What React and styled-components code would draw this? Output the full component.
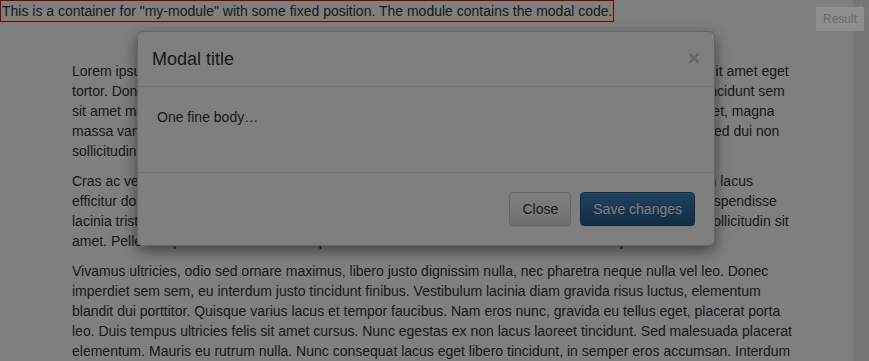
import React from 'react';
import styled, { createGlobalStyle } from 'styled-components';

const GlobalStyle = createGlobalStyle`
	html, body {
		margin: 0;
		padding: 0;
		height: 100%;
		overflow: hidden;
	}
	body {
		font-family: "Liberation Sans", Arial, sans-serif;
		font-size: 14px;
		line-height: 20px;
		color: #333;
		background: #fff;
	}
	#root {
		height: 100%;
	}
`;

const Frame = styled.div`
	position: relative;
	display: flex;
	height: 100%;
`;

const Viewport = styled.div`
	position: relative;
	flex: 1;
	overflow: hidden;
	background: #fff;
`;

const Scrollbar = styled.div`
	width: 16px;
	background: #777;
	display: flex;
	justify-content: center;
	padding-top: 6px;
	box-sizing: border-box;
`;

const ArrowUp = styled.span`
	width: 0;
	height: 0;
	border-left: 4px solid transparent;
	border-right: 4px solid transparent;
	border-bottom: 4px solid #a0a0a0;
`;

const ResultTag = styled.div`
	position: absolute;
	top: 7px;
	right: 5px;
	z-index: 3;
	width: 48px;
	height: 24px;
	display: flex;
	align-items: center;
	justify-content: center;
	background: #8e8e8e;
	color: #6a6a6a;
	font-size: 12px;
`;

const ModuleBox = styled.div`
	width: fit-content;
	border: 1px solid #f00;
	padding: 0 1px;
`;

const Container = styled.div`
	width: 720px;
	margin: 39px 0 0 72px;
`;

const Paragraph = styled.p`
	margin: 0 0 10px;
`;

const ModalLayer = styled.div`
	position: absolute;
	inset: 0;
	z-index: 1;
`;

const Dialog = styled.div`
	box-sizing: border-box;
	width: 578px;
	margin: 31px 0 0 137px;
	background: #fff;
	border: 1px solid rgba(0, 0, 0, 0.2);
	border-radius: 6px;
	box-shadow: 0 5px 15px rgba(0, 0, 0, 0.5);
`;

const ModalHeader = styled.div`
	display: flex;
	justify-content: space-between;
	align-items: center;
	padding: 15px 14px 15px 14px;
	border-bottom: 1px solid #e5e5e5;
`;

const ModalTitle = styled.h4`
	margin: 0;
	font-size: 18px;
	font-weight: normal;
	line-height: 24px;
`;

const CloseX = styled.button`
	padding: 0;
	border: 0;
	background: none;
	font-family: inherit;
	font-size: 21px;
	font-weight: bold;
	line-height: 1;
	color: #000;
	opacity: 0.2;
	text-shadow: 0 1px 0 #fff;
	margin-top: -3px;
`;

const ModalBody = styled.div`
	padding: 20px 19px;
	min-height: 45px;
`;

const ModalFooter = styled.div`
	display: flex;
	justify-content: flex-end;
	gap: 9px;
	padding: 19px;
	border-top: 1px solid #e5e5e5;
`;

const Button = styled.button`
	font-family: inherit;
	font-size: 14px;
	line-height: 20px;
	padding: 6px 12px;
	border-radius: 4px;
	border: 1px solid ${({ primary }) => (primary ? '#245580' : '#ccc')};
	color: ${({ primary }) => (primary ? '#fff' : '#333')};
	background-image: ${({ primary }) =>
		primary
			? 'linear-gradient(to bottom, #3d84c2 0, #265a88 100%)'
			: 'linear-gradient(to bottom, #fff 0, #e0e0e0 100%)'};
	text-shadow: ${({ primary }) =>
		primary ? '0 -1px 0 rgba(0,0,0,.2)' : '0 1px 0 #fff'};
	box-shadow: inset 0 1px 0 rgba(255, 255, 255, 0.15), 0 1px 1px rgba(0, 0, 0, 0.075);
`;

const Backdrop = styled.div`
	position: absolute;
	inset: 0;
	z-index: 2;
	background: rgba(0, 0, 0, 0.5);
`;

const paragraphs = [
	'Lorem ipsum dolor sit amet, consectetur adipiscing elit. Curabitur dapibus mauris in lectus feugiat, nec sit amet eget tortor. Donec vehicula mi vitae ipsum ultrices, at pretium nunc facilisis. Aenean quis laoreet dictum, et tincidunt sem sit amet mollis porta. Integer euismod orci eu risus porttitor, quis tempor velit commodo. Morbi nisi laoreet, magna massa varius sapien, non aliquam lectus ultricies vel. Phasellus fermentum ante vitae tellus imperdiet, sed dui non sollicitudin elit. Vestibulum ante ipsum primis in faucibus orci luctus et ultrices.',
	'Cras ac velit eget nulla interdum condimentum. Donec sagittis justo vel augue pulvinar, a blandit ante, in lacus efficitur dolor. Nam bibendum leo vitae purus tempus, eget gravida mauris vestibulum. Etiam id odio. Suspendisse lacinia tristique nisl, vitae fringilla arcu maximus at. Praesent ornare tortor quis enim molestie, ac justo sollicitudin sit amet. Pellentesque habitant morbi tristique senectus et netus et malesuada fames ac turpis.',
	'Vivamus ultricies, odio sed ornare maximus, libero justo dignissim nulla, nec pharetra neque nulla vel leo. Donec imperdiet sem sem, eu interdum justo tincidunt finibus. Vestibulum lacinia diam gravida risus luctus, elementum blandit dui porttitor. Quisque varius lacus et tempor faucibus. Nam eros nunc, gravida eu tellus eget, placerat porta leo. Duis tempus ultricies felis sit amet cursus. Nunc egestas ex non lacus laoreet tincidunt. Sed malesuada placerat elementum. Mauris eu rutrum nulla. Nunc consequat lacus eget libero tincidunt, in semper eros accumsan. Interdum et malesuada fames ac ante ipsum primis in faucibus. Curabitur sit amet lorem vitae nibh suscipit tempor.',
];

const App = () => {
	return (
		<Frame>
			<GlobalStyle />
			<Viewport>
				<ModuleBox>
					This is a container for "my-module" with some fixed position. The module contains the modal code.
				</ModuleBox>
				<Container>
					{paragraphs.map((text, i) => (
						<Paragraph key={i}>{text}</Paragraph>
					))}
				</Container>
				<ModalLayer>
					<Dialog>
						<ModalHeader>
							<ModalTitle>Modal title</ModalTitle>
							<CloseX>×</CloseX>
						</ModalHeader>
						<ModalBody>One fine body…</ModalBody>
						<ModalFooter>
							<Button>Close</Button>
							<Button primary>Save changes</Button>
						</ModalFooter>
					</Dialog>
				</ModalLayer>
				<Backdrop />
			</Viewport>
			<Scrollbar>
				<ArrowUp />
			</Scrollbar>
			<ResultTag>Result</ResultTag>
		</Frame>
	);
};

export default App;
